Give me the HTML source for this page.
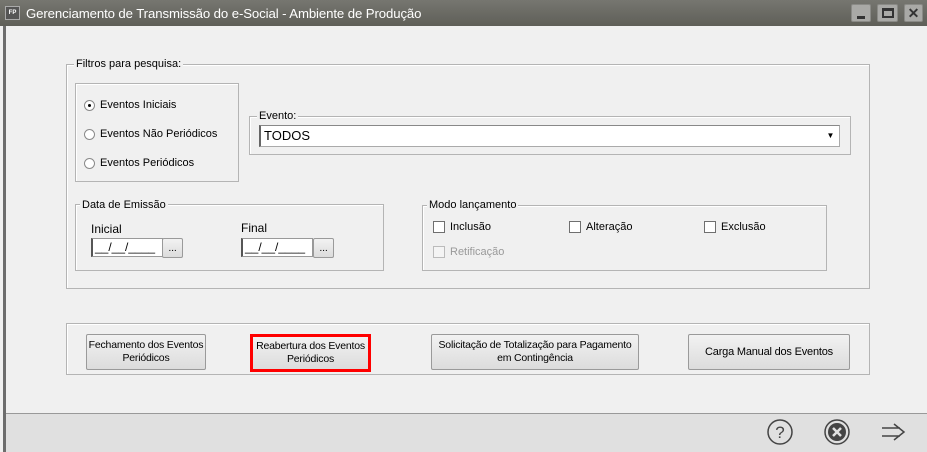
<!DOCTYPE html>
<html><head><meta charset="utf-8"><style>
*{margin:0;padding:0;box-sizing:border-box}
body{width:927px;height:452px;background:#f0f0f0;position:relative;overflow:hidden;font-family:"Liberation Sans",sans-serif;font-size:11px;color:#000}
.a{position:absolute}
.tb{left:0;top:0;width:927px;height:26px;background:linear-gradient(#767670,#5f5f58)}
.gb{border:1px solid #b4b4b4;box-shadow:1px 1px 0 #fff inset}
.lg{background:#f0f0f0;padding:0 2px;line-height:12px}
.rad{width:11px;height:11px;border-radius:50%;border:1px solid #8a8a8a;background:#fff}
.cb{width:12px;height:12px;border:1px solid #6f6f6f;background:#fff}
.btn{border:1px solid #9a9a9a;border-radius:2px;background:linear-gradient(#f2f2f2,#dcdcdc);text-align:center;display:flex;align-items:center;justify-content:center;line-height:13px;white-space:nowrap;font-size:10.5px;letter-spacing:-0.2px}
.wb{top:4px;height:18px;background:#a9a9a6;border:1px solid #8a8a86;border-radius:2px}
</style></head><body>
<div class="a tb"></div>
<div class="a" style="left:5px;top:6px;width:15px;height:14px;background:#555;border:1px solid #aaa;color:#fff;font-size:6px;font-weight:bold;line-height:12px;text-align:center">FP</div>
<div class="a" style="left:26px;top:6px;color:#fff;font-size:13.2px;letter-spacing:-0.1px">Gerenciamento de Transmissão do e-Social - Ambiente de Produção</div>
<div class="a wb" style="left:851px;width:20px"><div class="a" style="left:5px;top:11px;width:8px;height:3px;background:#333"></div></div>
<div class="a wb" style="left:877px;width:21px"><div class="a" style="left:4px;top:3px;width:12px;height:10px;border:2px solid #333;border-top-width:3px"></div></div>
<div class="a wb" style="left:904px;width:19px;color:#333;font-weight:bold;font-size:14px;text-align:center;line-height:16px">✕</div>
<div class="a" style="left:3px;top:26px;width:3px;height:426px;background:#6d6d6d"></div>

<div class="a gb" style="left:66px;top:64px;width:804px;height:225px"></div>
<div class="a lg" style="left:74px;top:58px">Filtros para pesquisa:</div>
<div class="a gb" style="left:75px;top:83px;width:164px;height:99px"></div>
<div class="a rad" style="left:84px;top:100px"><div class="a" style="left:3px;top:3px;width:3px;height:3px;background:#000;border-radius:50%"></div></div>
<div class="a" style="left:100px;top:99px">Eventos Iniciais</div>
<div class="a rad" style="left:84px;top:129px"></div>
<div class="a" style="left:100px;top:128px">Eventos Não Periódicos</div>
<div class="a rad" style="left:84px;top:158px"></div>
<div class="a" style="left:100px;top:157px">Eventos Periódicos</div>

<div class="a gb" style="left:249px;top:116px;width:602px;height:39px"></div>
<div class="a lg" style="left:257px;top:110px">Evento:</div>
<div class="a" style="left:259px;top:125px;width:581px;height:22px;background:#fff;border:1px solid #aaa;border-left:2px solid #666;border-top:1px solid #888;font-size:13px;line-height:20px;padding-left:3px">TODOS</div>
<div class="a" style="left:823px;top:127px;width:15px;height:18px;background:#fff;font-size:8px;text-align:center;line-height:18px">▼</div>

<div class="a gb" style="left:75px;top:204px;width:309px;height:67px"></div>
<div class="a lg" style="left:80px;top:199px">Data de Emissão</div>
<div class="a" style="left:91px;top:222px;font-size:12px">Inicial</div>
<div class="a" style="left:91px;top:238px;width:72px;height:19px;background:#fff;border:1px solid #999;border-left:2px solid #555;font-size:12px;line-height:16px;padding-left:2px">__/__/____</div>
<div class="a btn" style="left:162px;top:238px;width:21px;height:20px">...</div>
<div class="a" style="left:241px;top:221px;font-size:12px">Final</div>
<div class="a" style="left:241px;top:238px;width:72px;height:19px;background:#fff;border:1px solid #999;border-left:2px solid #555;font-size:12px;line-height:16px;padding-left:2px">__/__/____</div>
<div class="a btn" style="left:313px;top:238px;width:21px;height:20px">...</div>

<div class="a gb" style="left:422px;top:205px;width:405px;height:66px"></div>
<div class="a lg" style="left:427px;top:199px">Modo lançamento</div>
<div class="a cb" style="left:433px;top:221px"></div><div class="a" style="left:450px;top:221px">Inclusão</div>
<div class="a cb" style="left:569px;top:221px"></div><div class="a" style="left:586px;top:221px">Alteração</div>
<div class="a cb" style="left:704px;top:221px"></div><div class="a" style="left:721px;top:221px">Exclusão</div>
<div class="a cb" style="left:433px;top:246px;border-color:#bbb;background:#f4f4f4"></div><div class="a" style="left:450px;top:246px;color:#999">Retificação</div>

<div class="a gb" style="left:66px;top:323px;width:804px;height:52px"></div>
<div class="a btn" style="left:86px;top:334px;width:120px;height:36px">Fechamento dos Eventos<br>Periódicos</div>
<div class="a btn" style="left:250px;top:334px;width:121px;height:38px;border:3px solid #f00;border-radius:0">Reabertura dos Eventos<br>Periódicos</div>
<div class="a btn" style="left:431px;top:334px;width:208px;height:36px">Solicitação de Totalização para Pagamento<br>em Contingência</div>
<div class="a btn" style="left:688px;top:334px;width:162px;height:36px;font-size:11px">Carga Manual dos Eventos</div>

<div class="a" style="left:6px;top:413px;width:921px;height:39px;background:#e0e0e0;border-top:1px solid #999"></div>
<svg class="a" style="left:765px;top:418px" width="150" height="30">
<circle cx="15" cy="14" r="12" fill="none" stroke="#444" stroke-width="1.5"/>
<text x="15" y="20" font-family="Liberation Sans" font-size="17" text-anchor="middle" fill="#444">?</text>
<circle cx="72" cy="14" r="12" fill="none" stroke="#444" stroke-width="1.5"/>
<circle cx="72" cy="14" r="9" fill="#444"/>
<path d="M68 10 L76 18 M76 10 L68 18" stroke="#e0e0e0" stroke-width="2.5"/>
<path d="M117 10 H135 M117 18 H135 M129 6 L139 14 L129 22" fill="none" stroke="#444" stroke-width="1.5"/>
</svg>
</body></html>
